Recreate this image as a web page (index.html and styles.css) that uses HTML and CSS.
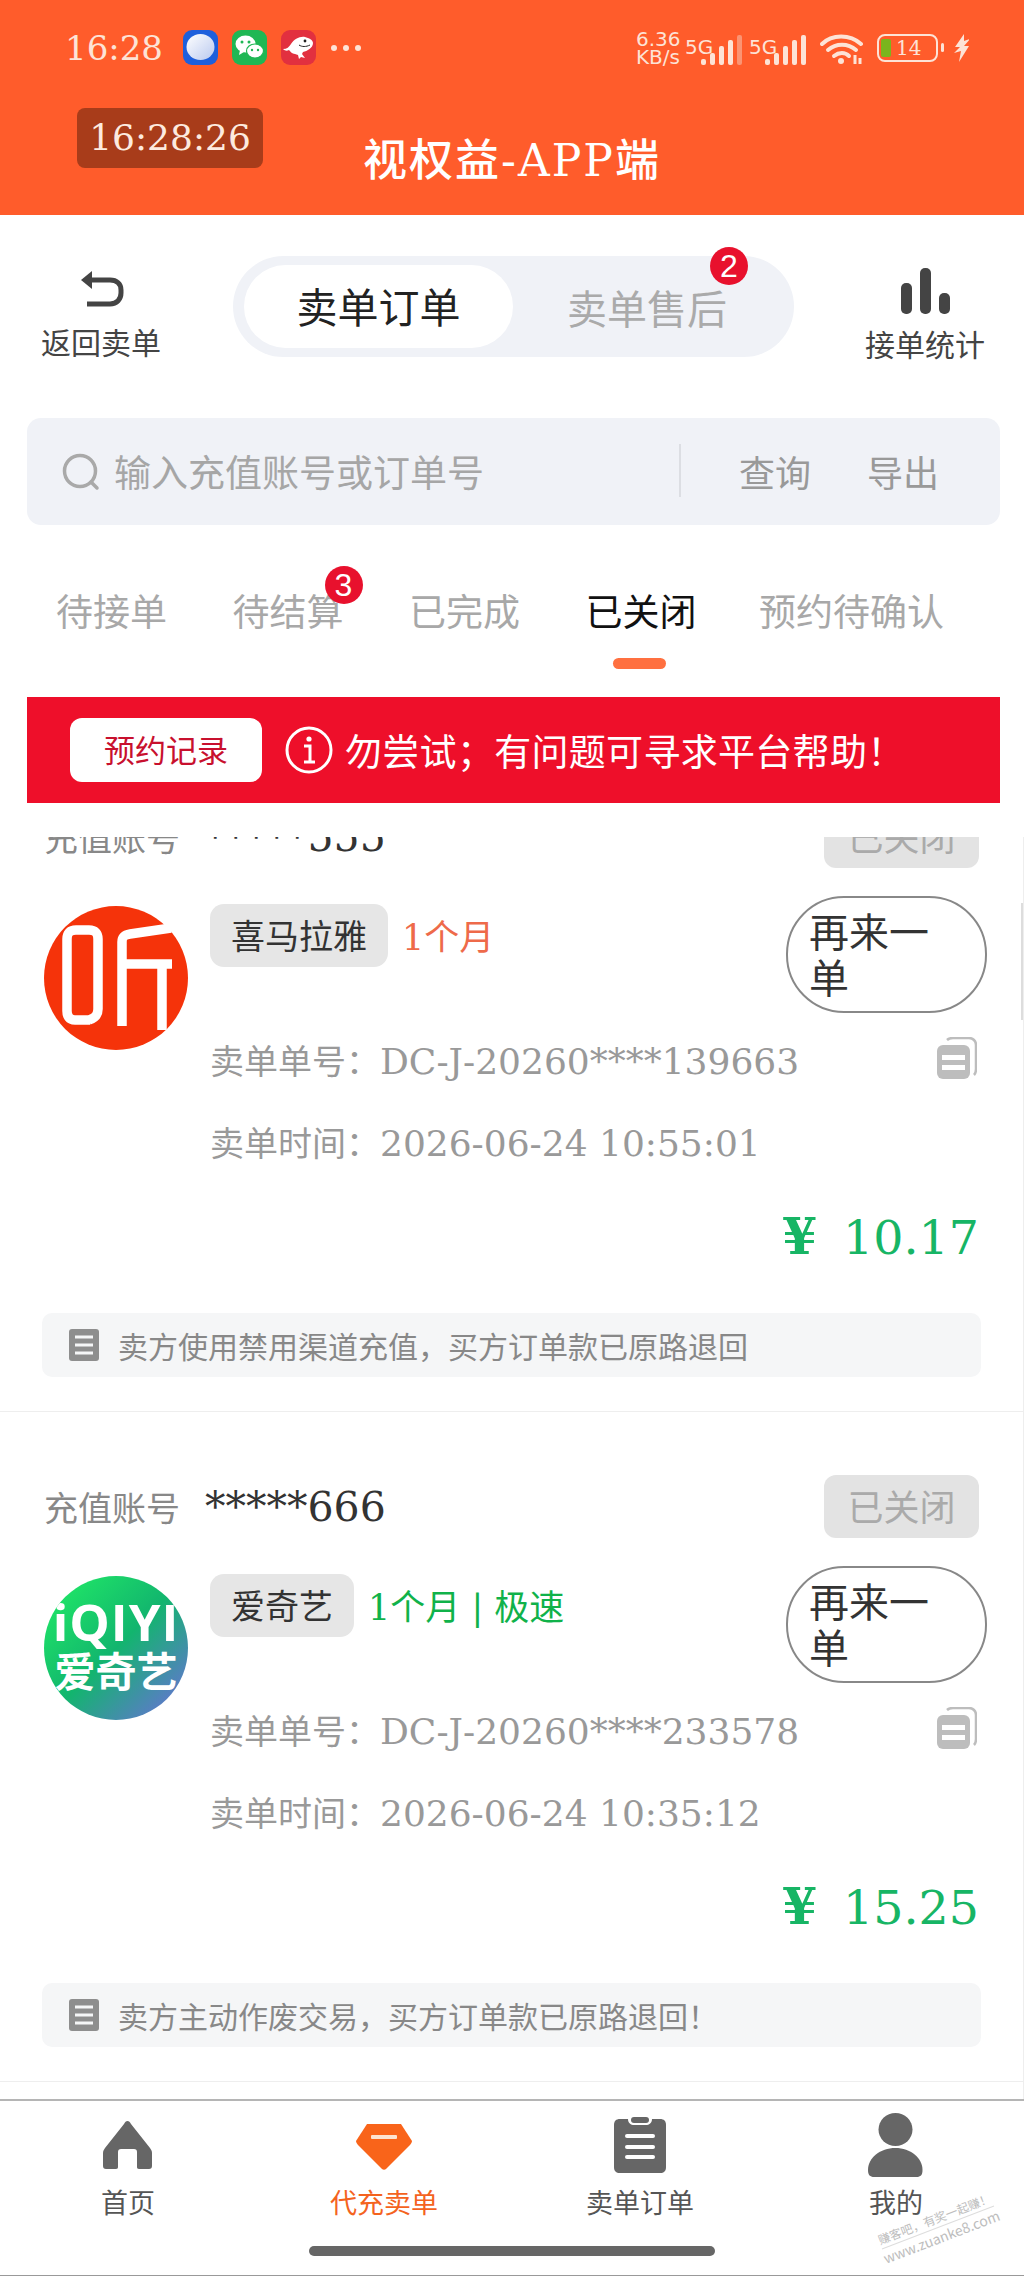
FILE: index.html
```html
<!DOCTYPE html>
<html lang="zh">
<head>
<meta charset="utf-8">
<title>视权益-APP端</title>
<link rel="stylesheet" href="styles.css">
</head>
<body>
<div class="page">
  <header class="top">
    <div class="status">
      <span class="clock">16:28</span>
      <svg class="app" viewBox="0 0 35 35"><defs><linearGradient id="msg" x1="0" y1="0" x2="1" y2="1"><stop offset="0" stop-color="#fff"/><stop offset="1" stop-color="#b9c9ef"/></linearGradient></defs><rect width="35" height="35" rx="9" fill="#1d5fdc"/><ellipse cx="17.5" cy="17" rx="14" ry="13" fill="url(#msg)"/></svg>
      <svg class="app" viewBox="0 0 35 35"><rect width="35" height="35" rx="9" fill="#1fb754"/><ellipse cx="13.5" cy="14" rx="10" ry="8.5" fill="#fff"/><path d="M8 20l-1 5 5-3z" fill="#fff"/><ellipse cx="23" cy="21" rx="8.5" ry="7" fill="#fff" stroke="#1fb754" stroke-width="1.2"/><circle cx="10" cy="12" r="1.5" fill="#1fb754"/><circle cx="17" cy="12" r="1.5" fill="#1fb754"/><circle cx="20" cy="20" r="1.2" fill="#1fb754"/><circle cx="26" cy="20" r="1.2" fill="#1fb754"/></svg>
      <svg class="app" viewBox="0 0 35 35"><rect width="35" height="35" rx="9" fill="#e2303f"/><path d="M2 19c4 0 6-2 8-5 3-5 9-8 14-7 4 1 8 3 8 6 0 5-6 8-10 9l-1 2 3 4-4-1-2 2-1-4-3-1c-3 0-5-3-6-4-2 1-4 1-6-1z" fill="#fff"/><circle cx="24" cy="11" r="1.4" fill="#222"/><path d="M18 15c3 2 7 2 11 0" stroke="#222" stroke-width="1" fill="none"/></svg>
      <span class="dots"><i></i><i></i><i></i></span>
      <span class="net">6.36<br>KB/s</span>
      <span class="gen">5G</span>
      <svg class="bars" viewBox="0 0 42 30"><g fill="#fde3d6"><rect x="0" y="24" width="5" height="6" rx="2"/><rect x="9" y="18" width="5" height="12" rx="2"/><rect x="18" y="11" width="5" height="19" rx="2"/><rect x="27" y="5" width="5" height="25" rx="2"/></g><rect x="36" y="0" width="5" height="30" rx="2" fill="#fb9473"/></svg>
      <span class="gen gen2">5G</span>
      <svg class="bars" viewBox="0 0 42 30"><g fill="#fde3d6"><rect x="0" y="24" width="5" height="6" rx="2"/><rect x="9" y="18" width="5" height="12" rx="2"/><rect x="18" y="11" width="5" height="19" rx="2"/><rect x="27" y="5" width="5" height="25" rx="2"/><rect x="36" y="0" width="5" height="30" rx="2"/></g></svg>
      <svg class="wifi" viewBox="0 0 44 30"><g fill="none" stroke="#fde3d6" stroke-width="4" stroke-linecap="round"><path d="M2 10C12 0 30 0 41 10"/><path d="M8 16c8-7 20-7 28 0"/><path d="M14 22c5-4 11-4 15 0"/></g><circle cx="21" cy="27" r="3" fill="#fde3d6"/><path d="M35 21v9M40 24v6" stroke="#fde3d6" stroke-width="3"/></svg>
      <span class="battery"><span class="charge"></span><span class="level">14</span></span>
      <span class="nub"></span>
      <svg class="bolt" viewBox="0 0 15 28"><path d="M10 0L1 13h5l-6 6 7-2-2 11 10-16h-5l6-7-6 2z" fill="#fde3d6"/></svg>
    </div>
    <div class="titlebar">
      <span class="timer">16:28:26</span>
      <h1 class="title">视权益-APP端</h1>
    </div>
  </header>

  <section class="controls">
    <div class="side back">
      <svg class="back-icon" viewBox="0 0 46 38"><path d="M14 2L3 11l11 9z" fill="#444"/><path d="M8 11h24c7 0 11 4 11 10v3c0 6-4 11-11 11H9" fill="none" stroke="#444" stroke-width="5"/></svg>
      <span>返回卖单</span>
    </div>
    <div class="segment">
      <span class="seg-item on">卖单订单</span>
      <span class="seg-item off">卖单售后<b class="badge seg-badge">2</b></span>
    </div>
    <div class="side stats">
      <svg class="stats-icon" viewBox="0 0 49 46"><g fill="#444"><rect x="0" y="15" width="11" height="31" rx="5"/><rect x="19" y="0" width="11" height="46" rx="5"/><rect x="38" y="25" width="11" height="21" rx="5"/></g></svg>
      <span>接单统计</span>
    </div>
  </section>

  <section class="search">
    <svg class="search-icon" viewBox="0 0 38 38"><circle cx="18" cy="18" r="15.5" fill="none" stroke="#a9a9a9" stroke-width="3.5"/><path d="M29 29l6 6" stroke="#a9a9a9" stroke-width="3.5" stroke-linecap="round"/></svg>
    <span class="placeholder">输入充值账号或订单号</span>
    <i class="search-sep"></i>
    <span class="search-act">查询</span>
    <span class="search-act">导出</span>
  </section>

  <nav class="tabs">
    <span class="tab">待接单</span>
    <span class="tab">待结算<b class="badge tab-badge">3</b></span>
    <span class="tab">已完成</span>
    <span class="tab active">已关闭</span>
    <span class="tab tab-last">预约待确认</span>
  </nav>

  <section class="banner">
    <span class="record">预约记录</span>
    <svg class="info" viewBox="0 0 48 48"><circle cx="24" cy="24" r="22" fill="none" stroke="#fff" stroke-width="3"/><circle cx="24" cy="13" r="2.6" fill="#fff"/><path d="M19 20h6v15M19 36h11" fill="none" stroke="#fff" stroke-width="3"/></svg>
    <span class="notice-text">勿尝试；有问题可寻求平台帮助！</span>
  </section>

  <main class="list">
    <div class="scroller">
      <article class="card">
        <div class="acct">
          <span class="acct-label">充值账号</span>
          <span class="acct-val">*****555</span>
          <span class="state">已关闭</span>
        </div>
        <div class="main-row">
          <svg class="logo" viewBox="0 0 144 144"><circle cx="72" cy="72" r="72" fill="#f5330a"/><g fill="none" stroke="#fff" stroke-width="9.500"><path d="M46 114H31c-6 0-8-4-8-9V33c0-6 3-9 9-9h13c6 0 9 3 9 9v70c0 6-3 9-9 11"/><path d="M127 22L86 28c-6 1-8 3-8 8v84"/><path d="M78 58h50M118 58v66"/></g></svg>
          <div class="body">
            <div class="head">
              <span class="tag">喜马拉雅</span>
              <span class="plan plan-red">1个月</span>
              <span class="again">再来一单</span>
            </div>
            <div class="meta first">卖单单号：<span class="meta-num">DC-J-20260****139663</span>
              <svg class="copy" viewBox="0 0 40 42"><path d="M10 3c1-1 3-2 6-2h16c4 0 7 3 7 7v24c0 3-1 5-2 6" fill="none" stroke="#bdbdbd" stroke-width="2.5"/><rect x="0" y="8" width="33" height="34" rx="6" fill="#bdbdbd"/><rect x="5" y="18" width="23" height="5" fill="#fff"/><rect x="5" y="28" width="23" height="5" fill="#fff"/></svg>
            </div>
            <div class="meta">卖单时间：<span class="meta-num">2026-06-24 10:55:01</span></div>
            <div class="price"><span class="yen">¥</span>10.17</div>
          </div>
        </div>
        <div class="reason">
          <svg class="reason-icon" viewBox="0 0 30 32"><rect width="30" height="32" rx="3" fill="#8e8e8e"/><path d="M6 8h18M6 16h18M6 24h18" stroke="#f5f6f7" stroke-width="3"/></svg>
          <span>卖方使用禁用渠道充值，买方订单款已原路退回</span>
        </div>
      </article>
      <article class="card">
        <div class="acct">
          <span class="acct-label">充值账号</span>
          <span class="acct-val">*****666</span>
          <span class="state">已关闭</span>
        </div>
        <div class="main-row">
          <div class="logo iqiyi"><span class="iq-en">iQIYI</span><span class="iq-cn">爱奇艺</span></div>
          <div class="body">
            <div class="head">
              <span class="tag">爱奇艺</span>
              <span class="plan plan-green">1个月 | 极速</span>
              <span class="again">再来一单</span>
            </div>
            <div class="meta first">卖单单号：<span class="meta-num">DC-J-20260****233578</span>
              <svg class="copy" viewBox="0 0 40 42"><path d="M10 3c1-1 3-2 6-2h16c4 0 7 3 7 7v24c0 3-1 5-2 6" fill="none" stroke="#bdbdbd" stroke-width="2.5"/><rect x="0" y="8" width="33" height="34" rx="6" fill="#bdbdbd"/><rect x="5" y="18" width="23" height="5" fill="#fff"/><rect x="5" y="28" width="23" height="5" fill="#fff"/></svg>
            </div>
            <div class="meta">卖单时间：<span class="meta-num">2026-06-24 10:35:12</span></div>
            <div class="price"><span class="yen">¥</span>15.25</div>
          </div>
        </div>
        <div class="reason">
          <svg class="reason-icon" viewBox="0 0 30 32"><rect width="30" height="32" rx="3" fill="#8e8e8e"/><path d="M6 8h18M6 16h18M6 24h18" stroke="#f5f6f7" stroke-width="3"/></svg>
          <span>卖方主动作废交易，买方订单款已原路退回！</span>
        </div>
      </article>
    </div>
    <i class="scrollbar"></i>
  </main>

  <footer class="tabbar">
    <div class="nav-items">
      <div class="nav-item">
        <svg class="nav-home" viewBox="0 0 49 48"><path d="M24.5 0c1.500 0 2.500 1 3.500 3l19 24c1 1.500 2 3 2 5v13c0 2-1 3-3 3H36c-1.500 0-2-1-2-2V31c0-2-1-3-3-3H18c-2 0-3 1-3 3v15c0 1-.5 2-2 2H3c-2 0-3-1-3-3V32c0-2 1-3.500 2-5L21 3c1-2 2-3 3.500-3z" fill="#666"/></svg>
        <span>首页</span>
      </div>
      <div class="nav-item current">
        <svg class="nav-gem" viewBox="0 0 56 46"><path d="M11 0h34l11 17c0 1-1 3-2 4L30 45c-1 1-3 1-4 0L2 21c-1-1-2-3-2-4z" fill="#f9641a"/><rect x="15" y="11" width="26" height="4" rx="1" fill="#fde3d0"/></svg>
        <span>代充卖单</span>
      </div>
      <div class="nav-item">
        <svg class="nav-clip" viewBox="0 0 52 56"><path d="M6 2h8c0 4 3 6 6 6h12c3 0 6-2 6-6h8c4 0 6 2 6 6v42c0 4-2 6-6 6H6c-4 0-6-2-6-6V8c0-4 2-6 6-6z" fill="#666"/><rect x="17" y="0" width="18" height="6" rx="3" fill="#666"/><g fill="#fff"><rect x="11" y="17" width="30" height="4" rx="2"/><rect x="11" y="28" width="30" height="4" rx="2"/><rect x="11" y="38" width="30" height="4" rx="2"/></g></svg>
        <span>卖单订单</span>
      </div>
      <div class="nav-item">
        <svg class="nav-user" viewBox="0 0 55 64"><ellipse cx="27.500" cy="16.500" rx="17" ry="16.500" fill="#666"/><path d="M27.500 35c15 0 27 10 27 22 0 5-2 7-6 7H6c-4 0-6-2-6-7 0-12 12-22 27.500-22z" fill="#666"/></svg>
        <span>我的</span>
      </div>
    </div>
    <i class="home-bar"></i>
    <div class="watermark"><span class="wm-cn">赚客吧，有奖一起赚！</span><span>www.zuanke8.com</span></div>
  </footer>
</div>
</body>
</html>
```

FILE: styles.css
```css
* { box-sizing: border-box; }
html, body { margin: 0; padding: 0; background: #fff; }
body { font-family: "Noto Sans CJK SC", sans-serif; }
.page { width: 1024px; height: 2276px; overflow: hidden; position: relative; display: flex; flex-direction: column; }
i, b { font-style: normal; }

.top { height: 215px; background: #ff5c2b; color: #fff; flex: none; }
.status { display: flex; align-items: center; height: 80px; padding: 15px 0 0 65px; color: #fde3d6; }
.clock { font-family: "DejaVu Serif", serif; font-size: 34px; width: 118px; }
.app { width: 35px; height: 35px; margin-right: 14px; }
.dots { display: flex; gap: 6px; margin: 0 0 0 1px; width: 305px; }
.dots i { width: 6px; height: 6px; background: #fde3d6; border-radius: 50%; }
.net { font-family: "DejaVu Sans", sans-serif; font-size: 20px; line-height: 18px; width: 49px; white-space: nowrap; }
.gen { font-family: "DejaVu Sans", sans-serif; font-size: 20px; line-height: 20px; align-self: flex-start; margin-top: 22px; width: 16px; white-space: nowrap; }
.gen2 { margin-left: 6px; }
.bars { width: 42px; height: 30px; margin-top: 4px; }
.wifi { width: 44px; height: 30px; margin: 2px 13px 0 13px; }
.battery { width: 61px; height: 28px; border: 2.500px solid #fde3d6; border-radius: 8px; display: flex; align-items: center; padding-left: 2px; }
.charge { width: 10px; height: 18px; background: #7ab51d; border-radius: 2px; margin-right: 5px; }
.level { font-family: "DejaVu Serif", serif; font-size: 20px; }
.nub { width: 3px; height: 9px; background: #fde3d6; margin: 0 10px 0 3px; border-radius: 2px; }
.bolt { width: 15px; height: 28px; }

.titlebar { position: relative; display: flex; justify-content: center; }
.timer { position: absolute; left: 77px; top: 28px; width: 186px; height: 60px; background: #a83c1a; border-radius: 8px; font-family: "DejaVu Serif", serif; font-size: 36px; line-height: 60px; text-align: center; color: #fdeadf; }
.title { margin: 57px 0 0; font-size: 44px; line-height: 48px; letter-spacing: 2px; font-weight: 500; color: #fff; font-family: "DejaVu Serif", "Noto Sans CJK SC", sans-serif; }

.controls { display: flex; align-items: flex-start; padding: 41px 0 0 0; height: 203px; flex: none; color: #444; }
.side { display: flex; flex-direction: column; align-items: center; font-size: 30px; line-height: 36px; width: 120px; }
.back { margin: 13px 0 0 41px; }
.back-icon { width: 46px; height: 38px; margin-bottom: 16px; }
.stats { margin: 12px 0 0 71px; }
.stats-icon { width: 49px; height: 46px; margin-bottom: 11px; }
.segment { width: 561px; height: 101px; margin-left: 72px; background: #f0f2f7; border-radius: 51px; display: flex; align-items: center; padding-left: 11px; font-size: 41px; }
.seg-item { position: relative; white-space: nowrap; }
.on { width: 269px; height: 83px; line-height: 80px; background: #fff; border-radius: 42px; text-align: center; color: #222; }
.off { margin-left: 54px; color: #aaa; font-size: 40px; }
.badge { position: absolute; width: 38px; height: 38px; border-radius: 50%; background: #e8112d; color: #fff; font-family: "Liberation Sans", sans-serif; font-weight: 400; font-size: 32px; line-height: 38px; text-align: center; }
.seg-badge { right: -21px; top: -31px; }

.search { margin: 0 24px 0 27px; flex: none; height: 107px; background: #f0f2f7; border-radius: 14px; display: flex; align-items: center; padding: 0 0 2px 35px; color: #a6a6a6; }
.search-icon { width: 38px; height: 38px; margin: 2px 14px 0 0; }
.placeholder { font-size: 37px; width: 565px; }
.search-sep { width: 2px; height: 53px; background: #dcdee3; margin-right: 58px; }
.search-act { font-size: 36px; width: 128px; color: #999; }

.tabs { display: flex; gap: 65.500px; padding: 0 0 0 56px; height: 172px; flex: none; font-size: 37px; color: #a8a8a8; }
.tab { position: relative; white-space: nowrap; line-height: 56px; margin-top: 57px; height: 56px; }
.tab-last { margin-left: -3px; }
.active { color: #111; }
.active::after { content: ""; position: absolute; left: 27px; bottom: -31px; width: 53px; height: 11px; border-radius: 6px; background: #ff7040; }
.tab-badge { right: -19px; top: -16px; }

.banner { margin: 0 24px 0 27px; flex: none; height: 106px; background: #ee0f2a; display: flex; align-items: center; padding-left: 43px; color: #fff; }
.record { width: 192px; height: 64px; background: #fff; color: #c8102e; font-size: 31px; line-height: 62px; text-align: center; border-radius: 12px; }
.info { width: 48px; height: 48px; margin: 0 12px 0 23px; }
.notice-text { font-size: 37px; letter-spacing: .3px; white-space: nowrap; }

.list { margin-top: 34px; height: 1262px; flex: none; overflow: hidden; position: relative; border-right: 1px solid #eee; }
.scroller { margin-top: -95px; }
.scrollbar { position: absolute; right: -1px; top: 66px; width: 3px; height: 117px; background: #ddd; }
.card { height: 670px; padding: 63px 44px 0; border-bottom: 1px solid #eee; }
.acct { display: flex; align-items: center; height: 63px; }
.acct-label { font-size: 34px; color: #888; width: 161px; }
.acct-val { font-family: "DejaVu Serif", serif; font-size: 41px; color: #333; flex: 1; }
.state { width: 155px; height: 63px; background: #e3e3e3; border-radius: 12px; color: #aaa; font-size: 36px; line-height: 61px; text-align: center; }
.main-row { display: flex; margin-top: 28px; }
.logo { width: 144px; height: 144px; margin: 10px 22px 0 0; flex: none; }
.iqiyi { border-radius: 50%; background: linear-gradient(135deg, #1fe467 10%, #12b56e 50%, #5f78cc 90%); color: #fff; display: flex; flex-direction: column; align-items: center; overflow: hidden; }
.iq-en { font-family: "Open Sans", sans-serif; font-weight: 700; font-size: 51px; line-height: 50px; margin-top: 20px; letter-spacing: 1px; white-space: nowrap; }
.iq-cn { font-weight: 700; font-size: 41px; line-height: 46px; white-space: nowrap; }
.body { flex: 1; }
.head { display: flex; align-items: flex-start; height: 117px; }
.tag { height: 63px; margin-top: 8px; padding: 0 21px; background: #e6e6e6; border-radius: 14px; color: #333; font-size: 34px; line-height: 61px; }
.plan { font-family: "DejaVu Serif", "Noto Sans CJK SC", serif; font-size: 35px; line-height: 61px; margin: 12px 0 0 14px; flex: 1; white-space: nowrap; }
.plan-red { color: #ee6a4a; }
.plan-green { color: #10b24a; }
.again { width: 201px; height: 117px; margin-right: -8px; padding: 9px 21px; border: 2px solid #888; border-radius: 58px; color: #333; font-size: 40px; line-height: 46px; flex: none; }
.meta { position: relative; font-size: 34px; line-height: 40px; margin-top: 42px; color: #999; white-space: nowrap; }
.meta-num { font-family: "DejaVu Serif", serif; font-size: 36px; line-height: 0; }
.first { margin-top: 27px; }
.copy { position: absolute; right: 2px; top: -3px; width: 40px; height: 42px; }
.price { font-family: "DejaVu Serif", serif; font-size: 47.500px; line-height: 56px; text-align: right; margin-top: 48px; color: #17b565; }
.yen { font-size: 50px; font-weight: 700; line-height: 0; margin-right: 26px; }
.reason { display: flex; align-items: center; height: 64px; margin: 47px -2px 0; padding-left: 27px; background: #f5f6f7; border-radius: 10px; font-size: 30px; color: #888; }
.reason-icon { width: 30px; height: 32px; margin-right: 19px; }

.tabbar { position: relative; flex: 1; border-top: 2px solid #b5b5b5; border-bottom: 1px solid #999; }
.nav-items { display: grid; grid-template-columns: repeat(4, 1fr); }
.nav-item { display: flex; flex-direction: column; align-items: center; font-size: 27px; line-height: 36px; color: #555; height: 119px; position: relative; justify-content: flex-end; }
.nav-item svg { position: absolute; }
.current { color: #f4631e; }
.nav-home { width: 49px; height: 48px; top: 20px; left: 103px; }
.nav-gem { width: 56px; height: 46px; top: 23px; left: 100px; }
.nav-clip { width: 52px; height: 56px; top: 16px; left: 102px; }
.nav-user { width: 55px; height: 64px; top: 12px; left: 100px; }
.home-bar { position: absolute; left: 309px; top: 145px; width: 406px; height: 10px; border-radius: 5px; background: #666; }
.watermark { position: absolute; right: 24px; top: 108px; width: 124px; display: flex; flex-direction: column; align-items: center; transform: rotate(-21deg); color: #bdbdbd; font-size: 14px; line-height: 18px; white-space: nowrap; }
.wm-cn { font-size: 12px; border-bottom: 1px solid #ddd; }
```
